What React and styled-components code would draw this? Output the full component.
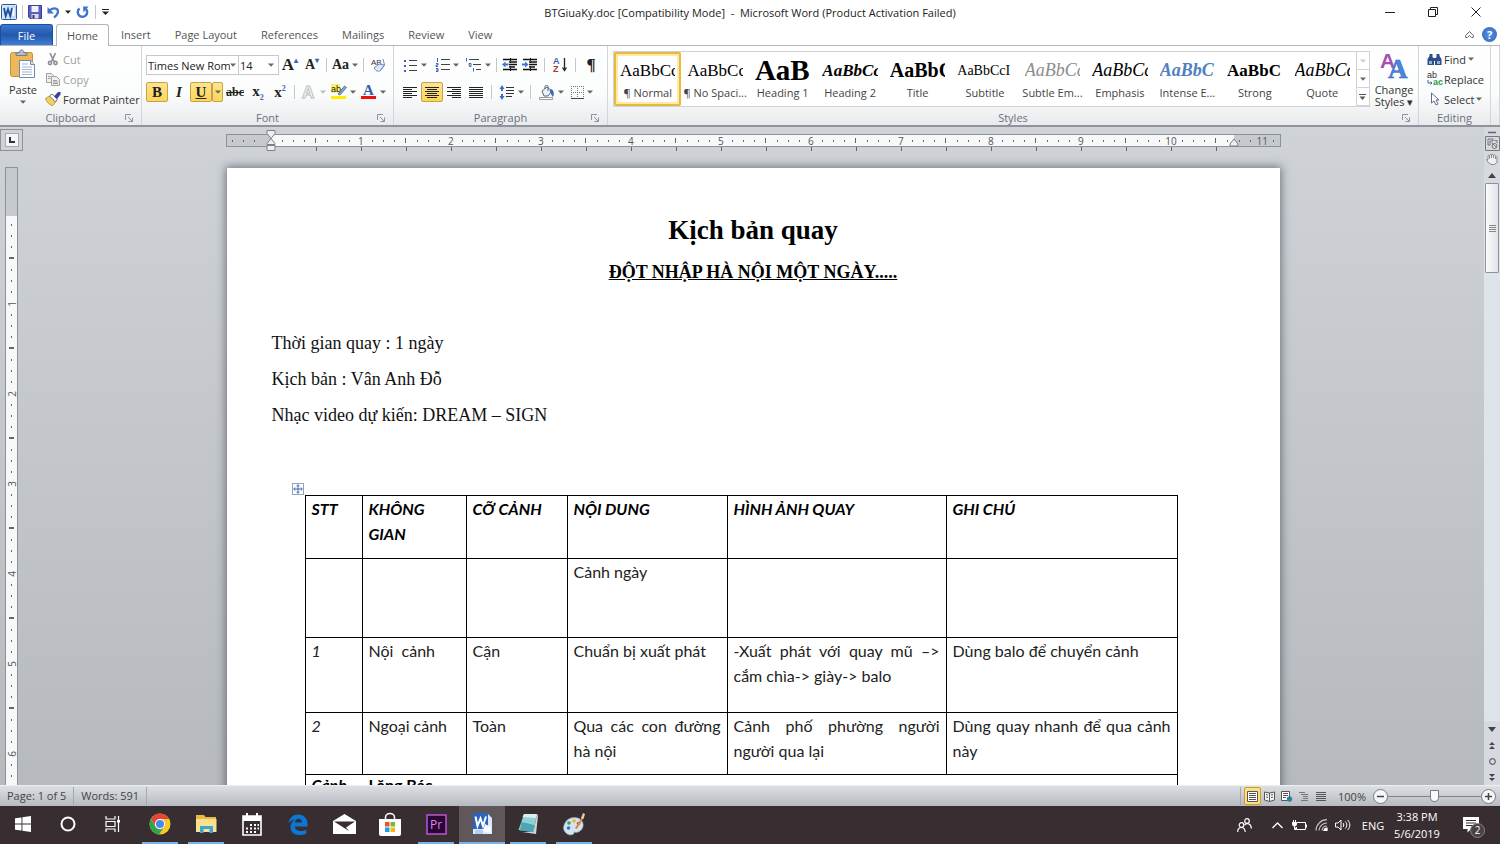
import React from "react";
import styled, { createGlobalStyle, css } from "styled-components";

const ui = `"Open Sans", "Noto Sans", sans-serif`;
const serif = `"Liberation Serif", "Times New Roman", serif`;

const styleList = [
  { name: "¶ Normal", text: "AaBbCc", size: 17, active: true },
  { name: "¶ No Spaci...", text: "AaBbCc", size: 17 },
  { name: "Heading 1", text: "AaB", size: 29, bold: true },
  { name: "Heading 2", text: "AaBbCc", size: 17, bold: true, italic: true },
  { name: "Title", text: "AaBbC", size: 20, bold: true },
  { name: "Subtitle", text: "AaBbCcI", size: 14 },
  { name: "Subtle Em...", text: "AaBbCc", size: 18, italic: true, color: "#8c8c8c" },
  { name: "Emphasis", text: "AaBbCc", size: 18, italic: true },
  { name: "Intense E...", text: "AaBbC", size: 18, bold: true, italic: true, color: "#4f81bd" },
  { name: "Strong", text: "AaBbC", size: 17, bold: true },
  { name: "Quote", text: "AaBbCc", size: 18, italic: true },
];

const tabs = ["Insert", "Page Layout", "References", "Mailings", "Review", "View"];

/* ---------- icons ---------- */

const Arrow = ({ c = "#666" }) => (
  <svg width="6" height="4" viewBox="0 0 6 4" aria-hidden="true">
    <path d="M0 .5h6L3 3.7z" fill={c} />
  </svg>
);

const WordLogo = () => (
  <svg width="16" height="16" viewBox="0 0 16 16">
    <rect x=".5" y=".5" width="15" height="15" rx="1" fill="#d3e6f8" stroke="#2b5797" />
    <path d="M11 3h3v10h-3z" fill="#fff" stroke="#7ea6d8" strokeWidth=".6" />
    <path d="M3 4l1.7 8L7 5.2 9.2 12 11 4" fill="none" stroke="#1e4e9c" strokeWidth="1.8" />
  </svg>
);
const SaveIcon = () => (
  <svg width="14" height="14" viewBox="0 0 14 14">
    <path d="M.5.5h13v13H2l-1.500-1.500z" fill="#5a5fc0" stroke="#3b3f93" />
    <path d="M3.500 1h7v6h-7z" fill="#eef2fb" />
    <path d="M3.500 9h7v4.500h-7z" fill="#d9dcea" />
    <path d="M4.500 10h2v3.500h-2z" fill="#333a6e" />
  </svg>
);
const UndoIcon = () => (
  <svg width="13" height="13" viewBox="0 0 13 13">
    <path d="M2.500 4.500C5 1.500 11 1.500 11 5.500c0 3-2 4.500-4 6" fill="none" stroke="#3f74cc" strokeWidth="2.200" />
    <path d="M.5 1v6.500h6.500z" fill="#3f74cc" />
  </svg>
);
const RedoIcon = () => (
  <svg width="13" height="13" viewBox="0 0 13 13">
    <path d="M3.500 2.500a4.700 4.700 0 1 0 6.500.5" fill="none" stroke="#3f74cc" strokeWidth="2.400" />
    <path d="M7 .5h5.500L7.500 6.500z" fill="#3f74cc" />
  </svg>
);
const PasteIcon = () => (
  <svg width="28" height="30" viewBox="0 0 28 30">
    <rect x="1.500" y="3.500" width="22" height="24" rx="2" fill="#ecb95a" stroke="#c98f35" />
    <path d="M7 6.500V4h3c0-4 5-4 5 0h3v2.500z" fill="#b9bec6" stroke="#777d86" />
    <path d="M10.500 11.500h11l4 4v13h-15z" fill="#fbfdff" stroke="#7089ad" />
    <path d="M21.500 11.500v4h4" fill="#d7e3f3" stroke="#7089ad" />
    <path d="M13 15h6M13 18h10M13 20.500h10M13 23h10M13 25.500h10" stroke="#a4b6cf" />
  </svg>
);
const CutIcon = () => (
  <svg width="12" height="14" viewBox="0 0 12 14" fill="none" stroke="#8e9197">
    <path d="M3 1l4 8.500M8.500 1L4.500 9.500" strokeWidth="1.700" />
    <circle cx="3" cy="11" r="1.600" strokeWidth="1.600" />
    <circle cx="8.500" cy="11" r="1.600" strokeWidth="1.600" />
  </svg>
);
const CopyIcon = () => (
  <svg width="14" height="13" viewBox="0 0 14 13" fill="#eee" stroke="#a0a0a0">
    <path d="M.5 .5h5l2 2v7h-7z" />
    <path d="M5.500 3.500h5l3 3v6h-8z" />
    <path d="M7 7.500h4M7 9h5M7 10.500h5M2 3.500h2.500M2 5.500h2.500" />
  </svg>
);
const PainterIcon = () => (
  <svg width="16" height="14" viewBox="0 0 16 14">
    <path d="M.5 6.500l4-2.500 6.500 5.500-3 4c-3 0-6.500-3-7.500-7z" fill="#f2cf63" stroke="#b98c22" strokeWidth=".8" />
    <path d="M4.500 4l2.500-2 5.500 5-2 3z" fill="#fff" stroke="#555" strokeWidth=".8" />
    <path d="M9 4.500L13 0h2.500v2.500L12 7z" fill="#3d3f96" />
  </svg>
);
const EraseIcon = () => (
  <svg width="16" height="16" viewBox="0 0 16 16">
    <text x="1" y="8" fontSize="8" fontFamily="Liberation Sans" fill="#333">AB</text>
    <path d="M4 11l5-4 5.500 1-4 5.500c-1 1-3 1-4.500 0z" fill="#dfe8f6" stroke="#6f8fc2" />
    <path d="M13 2l1.500 6-4 5.500" fill="none" stroke="#6f8fc2" />
  </svg>
);
const OutlineA = () => (
  <svg width="16" height="16" viewBox="0 0 16 16">
    <text x="1" y="14" fontSize="17" fontWeight="700" fontFamily="Liberation Sans" fill="#fff" stroke="#bdbdbd">A</text>
  </svg>
);
const HighlightIcon = () => (
  <svg width="16" height="16" viewBox="0 0 16 16">
    <rect x="0" y="0" width="9" height="9" fill="#fbf36a" />
    <text x="0" y="8" fontSize="9" fontFamily="Liberation Sans" fill="#222">ab</text>
    <path d="M7 10l6.500-8 2 1.500L9 11z" fill="#8aa2cc" stroke="#40547c" strokeWidth=".7" />
    <rect x="0" y="12" width="15" height="3" fill="#ffee00" />
  </svg>
);
const FontColorIcon = () => (
  <svg width="16" height="16" viewBox="0 0 16 16">
    <text x="2" y="11" fontSize="15" fontWeight="700" fontFamily="Liberation Serif" fill="#3a5fa8">A</text>
    <rect x="0" y="12" width="15" height="3" fill="#f01010" />
  </svg>
);
const LinesIcon = ({ rows }) => (
  <svg width="14" height="13" viewBox="0 0 14 13" stroke="#222" strokeWidth="1">
    {rows.map(([a, b], i) => (
      <path key={i} d={`M${a} ${i * 2 + 1.5}H${b}`} />
    ))}
  </svg>
);
const alignRows = {
  left: [[0, 14], [0, 9], [0, 14], [0, 9], [0, 14], [0, 9]],
  center: [[0, 14], [2, 12], [0, 14], [2, 12], [0, 14], [2, 12]],
  right: [[0, 14], [5, 14], [0, 14], [5, 14], [0, 14], [5, 14]],
  full: [[0, 14], [0, 14], [0, 14], [0, 14], [0, 14], [0, 14]],
};
const BulletsIcon = () => (
  <svg width="14" height="13" viewBox="0 0 14 13">
    <path d="M0 1h2v2H0zM0 6h2v2H0zM0 11h2v2H0z" fill="#3b63b5" />
    <path d="M5 1.500h8M5 6.500h8M5 11.500h8" stroke="#444" />
  </svg>
);
const NumbersIcon = () => (
  <svg width="14" height="14" viewBox="0 0 14 14">
    <path d="M1.500 0v4M0 5.500h2v1.500H0v1.500h2M0 10.500h2v3H0M0 12h2" stroke="#3b63b5" fill="none" />
    <path d="M5 1.500h9M5 6.500h9M5 11.500h9" stroke="#444" />
  </svg>
);
const MultiIcon = () => (
  <svg width="17" height="14" viewBox="0 0 17 14">
    <path d="M1.500 0v3.500M4 5.500h2v3H4.500zM8.500 10v3.500" stroke="#3b63b5" fill="none" />
    <path d="M4 1.500h10M8 6.500h8M11 11.500h5" stroke="#444" />
  </svg>
);
const IndentIcon = ({ flip }) => (
  <svg width="16" height="14" viewBox="0 0 16 14">
    <path d="M1 1.500h14M7 4h8M7 6.500h8M7 9h6M1 11.500h14" stroke="#111" strokeWidth="1.400" />
    <path d="M8.500 0v14" stroke="#111" strokeDasharray="1 1" />
    <path d={flip ? "M6.500 6.500L3 3.500v2H0v2h3v2z" : "M0 6.500l3.500-3v2h3v2h-3v2z"} fill="#3d76d0" />
  </svg>
);
const SortIcon = () => (
  <svg width="15" height="16" viewBox="0 0 15 16">
    <text x="0" y="7" fontSize="9" fontWeight="700" fontFamily="Liberation Sans" fill="#3b63b5">A</text>
    <text x="0" y="15" fontSize="9" fontWeight="700" fontFamily="Liberation Sans" fill="#a33b33">Z</text>
    <path d="M11.500 1v12M9.500 10.500l2 3 2-3" stroke="#222" fill="none" strokeWidth="1.300" />
  </svg>
);
const SpacingIcon = () => (
  <svg width="16" height="15" viewBox="0 0 16 15">
    <path d="M3 0l2.500 4H4v2H2V4H.5zM3 15l2.500-4H4V9H2v2H.5z" fill="#3d6cc0" />
    <path d="M7 2.500h8M7 5.500h8M7 8.500h8M7 11.500h6" stroke="#333" />
  </svg>
);
const ShadeIcon = () => (
  <svg width="16" height="15" viewBox="0 0 16 15">
    <path d="M3 6l5-4 5 4-4 5H5z" fill="#eef2f8" stroke="#55647d" />
    <path d="M6 4V1.500C6 0 9 0 9 1.500V6" fill="none" stroke="#55647d" />
    <path d="M12 4c3 1 3.500 5 2 8-1-1-2.500-4-3.500-6z" fill="#3d6cc0" />
    <path d="M.5 12.500h13v2H.5z" fill="#fff" stroke="#999" />
  </svg>
);
const BordersIcon = () => (
  <svg width="13" height="13" viewBox="0 0 13 13" fill="none" stroke="#777">
    <path d="M0 .5h13M.5 0v12M12.500 0v12M6.500 0v12M0 6.500h13" strokeDasharray="1 1" />
    <path d="M0 12.500h13" stroke="#444" />
  </svg>
);
const ChangeStylesIcon = () => (
  <svg width="30" height="28" viewBox="0 0 30 28">
    <text x="1" y="17" fontSize="21" fontWeight="700" fontFamily="Liberation Sans" fill="#a64fb4">A</text>
    <text x="9" y="27" fontSize="27" fontWeight="700" fontFamily="Liberation Serif" fill="#4b86dc" stroke="#2f62b5" strokeWidth=".5">A</text>
  </svg>
);
const FindIcon = () => (
  <svg width="15" height="13" viewBox="0 0 15 13" fill="#2e4f86">
    <path d="M2.500 1h3v3l1.500 2v6H.5V6l2-3zM9.500 1h3v2l2 3v6H8V6l1.500-2z" />
    <path d="M6 5h3v3H6z" />
    <path d="M2 8h3v3H2zM10 8h3v3h-3z" fill="#8fb0dd" />
  </svg>
);
const ReplaceIcon = () => (
  <svg width="15" height="14" viewBox="0 0 15 14">
    <text x="0" y="6" fontSize="9" fontFamily="Liberation Sans" fill="#333">ab</text>
    <text x="6" y="13" fontSize="9" fontWeight="700" fontFamily="Liberation Sans" fill="#2f9a46">ac</text>
    <path d="M1 8v3h4M3.500 9.500L5 11l-1.500 1.500" fill="none" stroke="#3b63b5" />
  </svg>
);
const SelectIcon = () => (
  <svg width="15" height="14" viewBox="0 0 15 14">
    <path d="M4.500 1v10l2.500-2 2 4 2-1-2-4h3z" fill="#fff" stroke="#5b6c8d" />
  </svg>
);
const Launcher = () => (
  <svg width="8" height="8" viewBox="0 0 8 8" fill="none" stroke="#8b929c">
    <path d="M.5 6V.5H6M3 3l4 4M7.500 3.500v4h-4" />
  </svg>
);

/* ---------- shell ---------- */

const GlobalStyle = createGlobalStyle`
  * { box-sizing: border-box; }
  body { margin: 0; font-family: ${ui}; font-size: 11px; color: #444; }
  button { font: inherit; color: inherit; background: none; border: 0; padding: 0; }
  svg { display: block; flex: none; overflow: visible; }
`;

const Window = styled.div`
  height: 100vh;
  display: flex;
  flex-direction: column;
  overflow: hidden;
  background: #fff;
`;

const TitleBar = styled.header`
  height: 24px;
  display: grid;
  grid-template-columns: 1fr auto 1fr;
  align-items: center;
`;
const QuickAccess = styled.div`
  display: flex;
  align-items: center;
  gap: 5px;
  padding-left: 1px;
  button {
    display: flex;
  }
`;
const Divider = styled.span`
  width: 1px;
  height: 14px;
  margin: 0 ${(p) => p.$m || 0}px;
  background: #c3c6ca;
`;
const WindowTitle = styled.h1`
  margin: 0;
  font-size: 11px;
  font-weight: 400;
  color: #222;
  white-space: pre;
`;
const WindowButtons = styled.div`
  display: flex;
  justify-content: flex-end;
  padding-right: 3px;
  button {
    width: 43px;
    height: 24px;
    display: grid;
    place-items: center;
  }
`;

const TabBar = styled.nav`
  height: 22px;
  display: flex;
  align-items: stretch;
  border-bottom: 1px solid #b3b6bb;
`;
const FileTab = styled.button`
  width: 53px;
  margin-right: 3px;
  color: #fff;
  border: 1px solid #1d4d9e;
  border-bottom: 0;
  border-radius: 3px 3px 0 0;
  background: linear-gradient(#3a78ce, #2458ac 50%, #3d7fd6);
`;
const Tab = styled.button`
  padding: 0 12px;
  color: #555;
  ${(p) =>
    p.$active &&
    css`
      width: 53px;
      padding: 0;
      margin-bottom: -1px;
      border: 1px solid #b3b6bb;
      border-bottom: 0;
      border-radius: 3px 3px 0 0;
      background: #fff;
    `}
`;
const TabTools = styled.div`
  margin-left: auto;
  display: flex;
  align-items: center;
  gap: 8px;
  padding-right: 3px;
`;
const HelpButton = styled.button`
  width: 15px;
  height: 15px;
  border-radius: 50%;
  background: radial-gradient(#5b95e0, #2f62b8);
  color: #fff;
  font-weight: 700;
  line-height: 15px;
`;

/* ---------- ribbon ---------- */

const Ribbon = styled.section`
  height: 81px;
  flex: none;
  display: flex;
  background: linear-gradient(#fff, #fbfcfc 60%, #e8eaed);
  border-bottom: 2px solid #8f949b;
`;
const Group = styled.div`
  display: flex;
  flex-direction: column;
  flex: ${(p) => (p.$w ? `0 0 ${p.$w}px` : "1 1 0")};
  min-width: 0;
  border-right: 1px solid #d3d6da;
`;
const GroupBody = styled.div`
  flex: 1;
  display: flex;
  padding: ${(p) => p.$pad || "0"};
  min-width: 0;
`;
const GroupFoot = styled.div`
  height: 15px;
  display: grid;
  grid-template-columns: 16px 1fr 16px;
  align-items: center;
  text-align: center;
  color: #6b717b;
  line-height: 15px;
`;
const RowStack = styled.div`
  display: flex;
  flex-direction: column;
  gap: 7px;
`;
const ToolRow = styled.div`
  height: 20px;
  display: flex;
  align-items: center;
`;
const Tool = styled.button`
  width: ${(p) => p.$w || 22}px;
  height: 20px;
  flex: none;
  display: flex;
  align-items: center;
  justify-content: center;
  gap: 3px;
  color: #222;
  border-radius: 2px;
  ${(p) =>
    p.$on &&
    css`
      background: linear-gradient(#fce48f, #fcd55b);
      border: 1px solid #c9a149;
    `}
`;
const SerifGlyph = styled.span`
  font-family: ${serif};
  font-size: ${(p) => p.$size || 15}px;
  font-weight: ${(p) => (p.$light ? 400 : 700)};
  font-style: ${(p) => (p.$italic ? "italic" : "normal")};
  text-decoration: ${(p) => p.$deco || "none"};
  line-height: 16px;
  sup,
  sub {
    font-size: 8px;
    line-height: 1;
    color: #3b63b5;
  }
`;
const Combo = styled.label`
  width: ${(p) => p.$w}px;
  height: 20px;
  flex: none;
  display: flex;
  align-items: center;
  border: 1px solid #c5c9ce;
  margin-right: ${(p) => (p.$join ? "-1px" : "0")};
  padding-right: ${(p) => (p.$join ? 2 : 4)}px;
  background: #fff;
  select {
    flex: 1;
    min-width: 0;
    appearance: none;
    border: 0;
    padding: 0 0 0 1px;
    background: none;
    font: inherit;
    color: #222;
  }
`;

const BigButton = styled.button`
  width: ${(p) => p.$w}px;
  display: flex;
  flex-direction: column;
  align-items: center;
  line-height: 12px;
  color: #333;
`;
const BigLabel = styled.span`
  padding: 5px 0 ${(p) => (p.$gap ? 4 : 0)}px;
`;
const SideList = styled.div`
  display: flex;
  flex-direction: column;
`;
const SideButton = styled.button`
  height: 20px;
  display: flex;
  align-items: center;
  gap: 2px;
  white-space: nowrap;
  color: ${(p) => (p.disabled ? "#a0a0a0" : "#333")};
`;
const IconSlot = styled.span`
  width: 16px;
  margin-left: 3px;
  display: flex;
  justify-content: center;
`;

const Gallery = styled.div`
  flex: 1;
  min-width: 0;
  height: 56px;
  display: flex;
  border: 1px solid #cfd2d6;
  background: #fff;
`;
const StyleCard = styled.button`
  flex: 1 1 0;
  min-width: 0;
  padding: 0 6px;
  display: flex;
  flex-direction: column;
  align-items: center;
  color: #444;
  ${(p) =>
    p.$active &&
    css`
      border-radius: 2px;
      box-shadow: inset 0 0 0 2px #e9b83f, inset 0 0 0 4px #fdeaa5;
    `}
`;
const Preview = styled.span`
  width: 100%;
  height: 32px;
  line-height: 37px;
  overflow: hidden;
  white-space: nowrap;
  text-align: left;
  font-family: ${serif};
  font-size: ${(p) => p.$size}px;
  font-weight: ${(p) => (p.$bold ? 700 : 400)};
  font-style: ${(p) => (p.$italic ? "italic" : "normal")};
  color: ${(p) => p.$color || "#000"};
`;
const StyleName = styled.span`
  height: 18px;
  line-height: 18px;
  white-space: nowrap;
`;
const GalleryNav = styled.div`
  width: 13px;
  display: flex;
  flex-direction: column;
  border-left: 1px solid #cfd2d6;
  button {
    flex: 1;
    display: grid;
    place-items: center;
    border-bottom: 1px solid #cfd2d6;
  }
`;

/* ---------- work area ---------- */

const Workspace = styled.main`
  flex: 1;
  min-height: 0;
  display: grid;
  grid-template-columns: 24px 1fr 16px;
  background: linear-gradient(#cfd3d8, #b6babf);
`;
const LeftRail = styled.div`
  display: flex;
  flex-direction: column;
  padding-top: 2px;
  min-height: 0;
  overflow: hidden;
`;
const TabSelector = styled.button`
  width: 23px;
  height: 22px;
  flex: none;
  display: grid;
  place-items: center;
  border: 1px solid #8d9299;
  margin-bottom: 16px;
  span {
    width: 14px;
    height: 14px;
    display: grid;
    place-items: center;
    border: 1px solid #a7abb1;
    background: #f4f5f6;
  }
`;
const Ruler = styled.div`
  display: flex;
  flex-direction: ${(p) => (p.$v ? "column" : "row")};
  overflow: hidden;
  border: 1px solid #8d9299;
  font-size: 10px;
  color: #555;
  ${(p) =>
    p.$v
      ? css`
          flex: 1;
          width: 13px;
          margin-left: 5px;
          border-bottom: 0;
        `
      : css`
          height: 13px;
        `}
`;
const RulerMargin = styled.div`
  flex: 0 0 ${(p) => p.$size}px;
  display: grid;
  grid-template-columns: repeat(4, minmax(0, 1fr));
  background: #c6cace;
`;
const RulerBody = styled.div`
  flex: 1;
  min-width: 0;
  display: flex;
  flex-direction: ${(p) => (p.$v ? "column" : "row")};
  padding: ${(p) => (p.$v ? "3px 0 0" : "0 0 0 6px")};
  overflow: hidden;
  background: #f7f8f9;
`;
const Inch = styled.div`
  flex: 0 0 90px;
  display: grid;
  ${(p) => (p.$v ? "grid-template-rows" : "grid-template-columns")}: repeat(8, minmax(0, 1fr));
`;
const Mark = styled.span`
  display: grid;
  place-items: center;
  line-height: 10px;
  white-space: nowrap;
  min-height: 0;
  writing-mode: ${(p) => (p.$v ? "sideways-lr" : "horizontal-tb")};
  &::before {
    content: ${(p) => (p.$num ? "none" : '""')};
    width: ${(p) => (p.$v && p.$half ? 5 : 1)}px;
    height: ${(p) => (!p.$v && p.$half ? 5 : 2)}px;
    background: #666;
  }
`;
const TabStops = styled.div`
  height: 4px;
  margin: 0 46px 0 90px;
  background: repeating-linear-gradient(90deg, #666 0 1px, transparent 1px 45px);
`;
const DocArea = styled.div`
  min-width: 0;
  min-height: 0;
  overflow: hidden;
  display: flex;
  flex-direction: column;
  align-items: center;
  padding: 7px 2px 0 0;
`;
const RulerWrap = styled.div`
  position: relative;
  width: 1055px;
  height: 34px;
  flex: none;
`;
const IndentMark = styled.svg`
  position: absolute;
  top: -4px;
  ${(p) => p.$side}: ${(p) => p.$at}px;
`;
const Paper = styled.article`
  width: 1053px;
  flex: 1 0 auto;
  padding: 40px 45px 0;
  background: #fff;
  box-shadow: 0 0 9px 1px rgba(40, 46, 56, 0.6);
  font-family: ${serif};
  font-size: 18px;
  color: #111;
`;
const DocTitle = styled.h2`
  margin: 0 0 2px;
  text-align: center;
  font-size: 27px;
  line-height: 44px;
  color: #000;
`;
const DocSubtitle = styled.h3`
  margin: 0 0 35px;
  text-align: center;
  font-size: 18px;
  line-height: 36px;
  text-decoration: underline;
  color: #000;
`;
const Para = styled.p`
  margin: 0;
  line-height: 36px;
`;
const TableWrap = styled.div`
  position: relative;
  margin: 62px 0 0 33px;
`;
const MoveHandle = styled.button`
  position: absolute;
  left: -13px;
  top: -12px;
  width: 12px;
  height: 12px;
  display: grid;
  place-items: center;
  border: 1px solid #9aa3b5;
  background: #fff;
`;
const Sheet = styled.table`
  width: 873px;
  table-layout: fixed;
  border-collapse: collapse;
  font-family: Lato, "Open Sans", sans-serif;
  font-size: 16px;
  line-height: 25px;
  color: #222;
`;
const Row = styled.tr`
  height: ${(p) => p.$h}px;
`;
const cell = css`
  border: 1px solid #000;
  padding: 0 6px;
  vertical-align: top;
  text-align: left;
`;
const Head = styled.th`
  ${cell}
  font-style: italic;
  color: #000;
`;
const Cell = styled.td`
  ${cell}
  white-space: pre;
  font-style: ${(p) => (p.$italic ? "italic" : "normal")};
`;
const Line = styled.span`
  display: block;
  white-space: normal;
  text-align-last: ${(p) => (p.$full ? "justify" : "left")};
`;
const SceneCell = styled.td`
  ${cell}
  font-weight: 700;
  color: #000;
  line-height: 20px;
  em {
    display: inline-block;
    width: 57px;
  }
`;

const ScrollRail = styled.div`
  display: flex;
  flex-direction: column;
  align-items: center;
  background: #d5d9e0;
  min-height: 0;
  button {
    width: 16px;
    height: 16px;
    flex: none;
    display: grid;
    place-items: center;
  }
`;
const ScrollTrack = styled.div`
  flex: 1;
  align-self: stretch;
  padding: 0 1px;
  background: #dfe3ea;
`;
const ScrollThumb = styled.div`
  height: 90px;
  display: grid;
  place-items: center;
  border: 1px solid #8d9299;
  border-radius: 1px;
  background: linear-gradient(90deg, #fafbfc, #dfe3e8);
`;

/* ---------- bottom bars ---------- */

const StatusBar = styled.footer`
  height: 21px;
  flex: none;
  display: flex;
  align-items: center;
  padding-right: 4px;
  border-top: 1px solid #eceef0;
  background: linear-gradient(#dcdfe3, #b7bbc1);
`;
const StatusItem = styled.span`
  padding: 0 7px;
  line-height: 18px;
  border-right: 1px solid #a3a8af;
`;
const Views = styled.div`
  margin-left: auto;
  display: flex;
  align-items: center;
  border-left: 1px solid #a3a8af;
  padding: 0 9px 0 3px;
`;
const ViewButton = styled.button`
  width: 17px;
  height: 18px;
  display: grid;
  place-items: center;
  border-radius: 2px;
  ${(p) =>
    p.$on &&
    css`
      border: 1px solid #d09a2c;
      background: #fce082;
    `}
`;
const ZoomLabel = styled.span`
  margin-right: 7px;
`;
const ZoomButton = styled.button`
  width: 15px;
  height: 15px;
  display: grid;
  place-items: center;
  border: 1px solid #777c84;
  border-radius: 50%;
  background: #f5f6f7;
`;
const ZoomRange = styled.input`
  appearance: none;
  width: 93px;
  height: 16px;
  margin: 0;
  background: linear-gradient(#7f848b, #7f848b) center / 100% 1px no-repeat;
  &::-webkit-slider-thumb {
    appearance: none;
    width: 9px;
    height: 12px;
    border: 1px solid #777c84;
    border-radius: 1px 1px 5px 5px;
    background: #fafafa;
  }
`;

const TaskBar = styled.nav`
  height: 38px;
  flex: none;
  display: flex;
  align-items: stretch;
  background: #382e32;
  color: #fff;
`;
const TaskSet = styled.div`
  display: flex;
  padding-right: 2px;
`;
const TaskButton = styled.button`
  width: ${(p) => p.$w || 46}px;
  padding: 0 5px;
  display: flex;
  flex-direction: column;
  align-items: center;
  background: ${(p) => (p.$active ? "#5f575a" : "none")};
  &::after {
    content: "";
    width: 100%;
    height: 2px;
    background: ${(p) => (p.$open ? "#78b4e8" : "transparent")};
    box-shadow: ${(p) => (p.$active ? "-5px 0 #78b4e8, 5px 0 #78b4e8" : "none")};
  }
  svg {
    margin: auto;
  }
`;
const Tray = styled.div`
  margin-left: auto;
  display: flex;
  align-items: center;
`;
const TrayButton = styled.button`
  width: ${(p) => p.$w || 22}px;
  display: grid;
  place-items: center;
`;
const Clock = styled.time`
  width: 50px;
  text-align: center;
  line-height: 17px;
  white-space: nowrap;
`;
const Notice = styled.span`
  position: relative;
`;
const Badge = styled.span`
  position: absolute;
  left: 7px;
  top: 6px;
  width: 15px;
  height: 15px;
  border: 1px solid #8a8386;
  border-radius: 50%;
  background: #4a4145;
  font-size: 10px;
  line-height: 13px;
  text-align: center;
`;

/* ---------- taskbar drawings ---------- */

const taskIcons = {
  start: (
    <svg width="16" height="16" viewBox="0 0 16 16" fill="#fff">
      <path d="M0 2.300L6.500 1.400v6.100H0zM7.400 1.300L16 0v7.500H7.400zM0 8.400h6.500v6.200L0 13.700zM7.400 8.400H16V16l-8.600-1.200z" />
    </svg>
  ),
  cortana: (
    <svg width="16" height="16" viewBox="0 0 16 16">
      <circle cx="8" cy="8" r="6.500" fill="none" stroke="#fff" strokeWidth="2" />
    </svg>
  ),
  tasks: (
    <svg width="16" height="16" viewBox="0 0 16 16" fill="none" stroke="#fff" strokeWidth="1.200">
      <path d="M1 0v3h9V0M1 16v-3h9v3M1 5.500h9v5H1zM13.500 0v16" />
      <path d="M12 4h3v2.500h-3z" fill="#fff" stroke="none" />
    </svg>
  ),
  chrome: (
    <svg width="22" height="22" viewBox="0 0 22 22">
      <circle cx="11" cy="11" r="10.500" fill="#f6c92b" />
      <path d="M2 5.700A10.500 10.500 0 0 1 20.200 6H11a5 5 0 0 0-4.600 7z" fill="#e0473a" />
      <path d="M2 5.700A10.500 10.500 0 0 0 10 21.500l5-7.500a5 5 0 0 1-8.600-.5z" fill="#32a350" />
      <circle cx="11" cy="11" r="5" fill="#fff" />
      <circle cx="11" cy="11" r="4" fill="#4a86ef" />
    </svg>
  ),
  folder: (
    <svg width="21" height="20" viewBox="0 0 21 20">
      <path d="M0 1h8l1.500 2H20v15H0z" fill="#e9b94a" />
      <path d="M0 5h20.500v13H0z" fill="#fbe08d" />
      <path d="M4 19v-7h13v7h-3.500v-4h-6v4z" fill="#3aa6d9" />
    </svg>
  ),
  calendar: (
    <svg width="20" height="23" viewBox="0 0 20 23">
      <path d="M1 3h18v19H1z" fill="none" stroke="#fff" strokeWidth="1.600" />
      <path d="M1 3h18v5H1zM4 0h2v4H4zM14 0h2v4h-2z" fill="#fff" />
      <path d="M8 11h2v2H8zM12 11h2v2h-2zM15.500 11h1.500v2h-1.500zM4 14.500h2v2H4zM8 14.500h2v2H8zM12 14.500h2v2h-2zM15.500 14.500h1.500v2h-1.500zM4 18h2v2H4zM8 18h2v2H8zM12 18h2v2h-2z" fill="#fff" />
    </svg>
  ),
  edge: (
    <svg width="20" height="21" viewBox="0 0 20 21">
      <path d="M.5 9.500C1.500 3.500 5.500.5 10 .5c6 0 9.500 4.200 9.500 9.500v2.500H6.800c.3 3 2.800 4.500 5.700 4.500 2.200 0 4.200-.6 5.800-1.600v4C16.500 20.400 14 21 11.500 21 6 21 2.500 17.500 2.500 13c0-3.300 1.800-6 5-7.500C4.500 5.700 2.300 7 .5 9.500zM7 8.500h7c0-2.300-1.300-3.800-3.400-3.800C8.600 4.700 7.300 6.300 7 8.500z" fill="#0b78d7" />
    </svg>
  ),
  mail: (
    <svg width="23" height="20" viewBox="0 0 23 20">
      <path d="M0 7L11.500 0 23 7v13H0z" fill="#fff" />
      <path d="M1 7.500h21L13 13.500l3 3.500z" fill="#382e32" />
    </svg>
  ),
  store: (
    <svg width="22" height="23" viewBox="0 0 22 23">
      <path d="M6.500 6V4.500a4.500 4 0 0 1 9 0V6" fill="none" stroke="#fff" strokeWidth="1.500" />
      <path d="M0 6h22v15a2 2 0 0 1-2 2H2a2 2 0 0 1-2-2z" fill="#fff" />
      <path d="M6 9h4.500v4.500H6z" fill="#e8532a" />
      <path d="M11.500 9H16v4.500h-4.500z" fill="#7cb82f" />
      <path d="M6 14.500h4.500V19H6z" fill="#1ba0e2" />
      <path d="M11.500 14.500H16V19h-4.500z" fill="#fbb813" />
    </svg>
  ),
  premiere: (
    <svg width="21" height="21" viewBox="0 0 21 21">
      <rect x="1" y="1" width="19" height="19" fill="#2a0634" stroke="#b957d3" strokeWidth="1.500" />
      <text x="4" y="15" fontSize="12" fontFamily="Open Sans" fill="#dc86f2">Pr</text>
    </svg>
  ),
  word: (
    <svg width="21" height="22" viewBox="0 0 21 22">
      <path d="M1 0h14l5 5v16H1z" fill="#dbe9f9" />
      <path d="M1 0h15v16H1z" fill="#2a64bd" />
      <path d="M3.500 3.500L5.500 13 8.500 5.500l2.500 7.500 3-9.500" fill="none" stroke="#fff" strokeWidth="2" />
      <path d="M13 11l6 3v6l-8-2z" fill="#f7fbff" />
      <path d="M3 18h8M3 20h8" stroke="#8eb3e3" />
    </svg>
  ),
  notepad: (
    <svg width="21" height="22" viewBox="0 0 21 22">
      <path d="M6 1h13l-3.500 18-15-2z" fill="#8fd0d8" />
      <path d="M6 1h13l-1 4-13.500-1z" fill="#d8eef0" />
      <path d="M19 1l1 2-2 18-14-2 11.500 0z" fill="#cfd5d6" />
      <path d="M3.500 9l13 3-1.500 7-13-1.500z" fill="#4fa5b2" />
    </svg>
  ),
  paint: (
    <svg width="23" height="23" viewBox="0 0 23 23">
      <path d="M2 10c3-6 12-7 16-3 3 3 3 8-1 11s-6 0-6 2-5 3-8 0-3-6-1-10z" fill="#d5e3ee" stroke="#8fa9bd" strokeWidth=".7" />
      <circle cx="6" cy="10" r="1.800" fill="#38a34c" />
      <circle cx="11" cy="8" r="1.800" fill="#e8b624" />
      <circle cx="15.500" cy="10.500" r="1.800" fill="#d9472b" />
      <circle cx="5.500" cy="15" r="1.800" fill="#2f6fc4" />
      <path d="M12 15l7-11 1.500 1L14 16z" fill="#c98f4a" />
      <path d="M18 5l2-5 2 1-1.500 5z" fill="#e9cfa0" />
    </svg>
  ),
};

const pinned = [
  { id: "chrome", label: "Chrome", open: true },
  { id: "folder", label: "File Explorer", open: true },
  { id: "calendar", label: "Calendar" },
  { id: "edge", label: "Edge" },
  { id: "mail", label: "Mail" },
  { id: "store", label: "Store" },
  { id: "premiere", label: "Premiere", open: true },
  { id: "word", label: "Word", open: true, active: true },
  { id: "notepad", label: "Notepad", open: true },
  { id: "paint", label: "Paint", open: true },
];

/* ---------- parts ---------- */

function InchMarks({ n, v }) {
  return (
    <Inch $v={v}>
      {[1, 2, 3, 4, 5, 6, 7].map((k) => (
        <Mark key={k} $v={v} $half={k === 4} />
      ))}
      <Mark $v={v} $num>
        {n}
      </Mark>
    </Inch>
  );
}

function Foot({ children, launcher = true }) {
  return (
    <GroupFoot>
      <span />
      <span>{children}</span>
      {launcher && <Launcher />}
    </GroupFoot>
  );
}

function RibbonBar() {
  return (
    <Ribbon>
      <Group $w={142}>
        <GroupBody $pad="3px 0 0 4px">
          <BigButton $w={38}>
            <PasteIcon />
            <BigLabel $gap>Paste</BigLabel>
            <Arrow />
          </BigButton>
          <SideList>
            <SideButton disabled>
              <IconSlot><CutIcon /></IconSlot>Cut
            </SideButton>
            <SideButton disabled>
              <IconSlot><CopyIcon /></IconSlot>Copy
            </SideButton>
            <SideButton>
              <IconSlot><PainterIcon /></IconSlot>Format Painter
            </SideButton>
          </SideList>
        </GroupBody>
        <Foot>Clipboard</Foot>
      </Group>

      <Group $w={252}>
        <GroupBody $pad="9px 0 0 4px">
          <RowStack>
            <ToolRow>
              <Combo $w={93} $join>
                <select aria-label="Font"><option>Times New Rom</option></select>
                <Arrow />
              </Combo>
              <Combo $w={41}>
                <select aria-label="Font size"><option>14</option></select>
                <Arrow />
              </Combo>
              <Tool aria-label="Grow font"><SerifGlyph $size={17}>A<sup>▴</sup></SerifGlyph></Tool>
              <Tool aria-label="Shrink font"><SerifGlyph $size={14}>A<sup>▾</sup></SerifGlyph></Tool>
              <Divider $m={3} />
              <Tool $w={30}><SerifGlyph $size={14}>Aa</SerifGlyph><Arrow /></Tool>
              <Divider $m={3} />
              <Tool aria-label="Clear formatting"><EraseIcon /></Tool>
            </ToolRow>
            <ToolRow>
              <Tool $on><SerifGlyph>B</SerifGlyph></Tool>
              <Tool><SerifGlyph $italic>I</SerifGlyph></Tool>
              <Tool $on><SerifGlyph $deco="underline">U</SerifGlyph></Tool>
              <Tool $on $w={11} aria-label="Underline styles"><Arrow /></Tool>
              <Tool $w={24}><SerifGlyph $size={12} $deco="line-through">abc</SerifGlyph></Tool>
              <Tool><SerifGlyph>x<sub>2</sub></SerifGlyph></Tool>
              <Tool><SerifGlyph>x<sup>2</sup></SerifGlyph></Tool>
              <Divider $m={3} />
              <Tool $w={30} aria-label="Text effects"><OutlineA /><Arrow c="#bbb" /></Tool>
              <Tool $w={30} aria-label="Highlight"><HighlightIcon /><Arrow /></Tool>
              <Tool $w={30} aria-label="Font color"><FontColorIcon /><Arrow /></Tool>
            </ToolRow>
          </RowStack>
        </GroupBody>
        <Foot>Font</Foot>
      </Group>

      <Group $w={214}>
        <GroupBody $pad="9px 0 0 5px">
          <RowStack>
            <ToolRow>
              <Tool $w={32} aria-label="Bullets"><BulletsIcon /><Arrow /></Tool>
              <Tool $w={32} aria-label="Numbering"><NumbersIcon /><Arrow /></Tool>
              <Tool $w={30} aria-label="Multilevel list"><MultiIcon /><Arrow /></Tool>
              <Divider $m={3} />
              <Tool $w={20} aria-label="Decrease indent"><IndentIcon /></Tool>
              <Tool $w={20} aria-label="Increase indent"><IndentIcon flip /></Tool>
              <Divider $m={4} />
              <Tool aria-label="Sort"><SortIcon /></Tool>
              <Divider $m={4} />
              <Tool><SerifGlyph $size={17}>¶</SerifGlyph></Tool>
            </ToolRow>
            <ToolRow>
              <Tool aria-label="Align left"><LinesIcon rows={alignRows.left} /></Tool>
              <Tool $on aria-label="Center"><LinesIcon rows={alignRows.center} /></Tool>
              <Tool aria-label="Align right"><LinesIcon rows={alignRows.right} /></Tool>
              <Tool aria-label="Justify"><LinesIcon rows={alignRows.full} /></Tool>
              <Divider $m={4} />
              <Tool $w={30} aria-label="Line spacing"><SpacingIcon /><Arrow /></Tool>
              <Divider $m={4} />
              <Tool $w={32} aria-label="Shading"><ShadeIcon /><Arrow /></Tool>
              <Tool $w={30} aria-label="Borders"><BordersIcon /><Arrow /></Tool>
            </ToolRow>
          </RowStack>
        </GroupBody>
        <Foot>Paragraph</Foot>
      </Group>

      <Group>
        <GroupBody $pad="5px 0 0 5px">
          <Gallery>
            {styleList.map((s) => (
              <StyleCard key={s.name} $active={s.active}>
                <Preview $size={s.size} $bold={s.bold} $italic={s.italic} $color={s.color}>
                  {s.text}
                </Preview>
                <StyleName>{s.name}</StyleName>
              </StyleCard>
            ))}
            <GalleryNav>
              <button aria-label="Previous styles"><Arrow c="#ccc" /></button>
              <button aria-label="Next styles"><Arrow /></button>
              <button aria-label="More styles">
                <svg width="7" height="6" viewBox="0 0 7 6"><path d="M0 .5h7" stroke="#555" /><path d="M.5 2.500h6L3.500 6z" fill="#555" /></svg>
              </button>
            </GalleryNav>
          </Gallery>
          <BigButton $w={48}>
            <ChangeStylesIcon />
            <BigLabel>Change</BigLabel>
            <span>Styles ▾</span>
          </BigButton>
        </GroupBody>
        <Foot>Styles</Foot>
      </Group>

      <Group $w={72}>
        <GroupBody $pad="3px 0 0 8px">
          <SideList>
            <SideButton><FindIcon />Find <Arrow /></SideButton>
            <SideButton><ReplaceIcon />Replace</SideButton>
            <SideButton><SelectIcon />Select <Arrow /></SideButton>
          </SideList>
        </GroupBody>
        <Foot launcher={false}>Editing</Foot>
      </Group>
      <Group $w={9} />
    </Ribbon>
  );
}

function Document() {
  return (
    <DocArea>
      <RulerWrap>
        <Ruler>
          <RulerMargin $size={44}>
            <Mark /><Mark /><Mark />
          </RulerMargin>
          <RulerBody>
            {[1, 2, 3, 4, 5, 6, 7, 8, 9, 10, 11].map((n) => (
              <InchMarks key={n} n={n} />
            ))}
          </RulerBody>
          <RulerMargin $size={46}>
            <Mark /><Mark /><Mark $num>11</Mark><Mark />
          </RulerMargin>
        </Ruler>
        <TabStops />
        <IndentMark $side="left" $at={40} width="10" height="22" viewBox="0 0 10 22" fill="#eee" stroke="#7c8187">
          <path d="M1 .5h8v3l-4 5-4-5zM5 8.500l4 5v1H1v-1zM1 15.500h8v5H1z" />
        </IndentMark>
        <IndentMark $side="right" $at={42} width="10" height="22" viewBox="0 0 10 22" fill="#eee" stroke="#7c8187">
          <path d="M5 9l4 5v2H1v-2z" />
        </IndentMark>
      </RulerWrap>
      <Paper>
        <DocTitle>Kịch bản quay</DocTitle>
        <DocSubtitle>ĐỘT NHẬP HÀ NỘI MỘT NGÀY.....</DocSubtitle>
        <Para>Thời gian quay : 1 ngày</Para>
        <Para>Kịch bản : Vân Anh Đỗ</Para>
        <Para>Nhạc video dự kiến: DREAM – SIGN</Para>
        <TableWrap>
          <MoveHandle aria-label="Move table">
            <svg width="10" height="10" viewBox="0 0 10 10" fill="none" stroke="#3b63b5">
              <path d="M5 1v8M1 5h8M3.500 2L5 .7 6.500 2M3.500 8L5 9.300 6.500 8M2 3.500L.7 5 2 6.500M8 3.500L9.300 5 8 6.500" />
            </svg>
          </MoveHandle>
          <Sheet>
            <colgroup>
              <col width="57" />
              <col width="104" />
              <col width="101" />
              <col width="160" />
              <col width="219" />
              <col />
            </colgroup>
            <thead>
              <Row $h={63}>
                <Head>STT</Head>
                <Head>KHÔNG GIAN</Head>
                <Head>CỠ CẢNH</Head>
                <Head>NỘI DUNG</Head>
                <Head>HÌNH ẢNH QUAY</Head>
                <Head>GHI CHÚ</Head>
              </Row>
            </thead>
            <tbody>
              <Row $h={79}>
                <Cell /><Cell /><Cell />
                <Cell>Cảnh ngày</Cell>
                <Cell /><Cell />
              </Row>
              <Row $h={75}>
                <Cell $italic>1</Cell>
                <Cell>Nội  cảnh</Cell>
                <Cell>Cận</Cell>
                <Cell>Chuẩn bị xuất phát</Cell>
                <Cell>
                  <Line $full>-Xuất phát với quay mũ –&gt;</Line>
                  <Line>cắm chìa-&gt; giày-&gt; balo</Line>
                </Cell>
                <Cell>Dùng balo để chuyển cảnh</Cell>
              </Row>
              <Row $h={62}>
                <Cell $italic>2</Cell>
                <Cell>Ngoại cảnh</Cell>
                <Cell>Toàn</Cell>
                <Cell>
                  <Line $full>Qua các con đường</Line>
                  <Line>hà nội</Line>
                </Cell>
                <Cell>
                  <Line $full>Cảnh phố phường người</Line>
                  <Line>người qua lại</Line>
                </Cell>
                <Cell>
                  <Line $full>Dùng quay nhanh để qua cảnh</Line>
                  <Line>này</Line>
                </Cell>
              </Row>
              <Row $h={62}>
                <SceneCell colSpan={6}><em>Cảnh</em>Lăng Bác</SceneCell>
              </Row>
            </tbody>
          </Sheet>
        </TableWrap>
      </Paper>
    </DocArea>
  );
}

function Scrollbar() {
  return (
    <ScrollRail>
      <svg width="16" height="8" viewBox="0 0 16 8"><path d="M4 5.500h8" stroke="#666" strokeWidth="1.500" /></svg>
      <button aria-label="Ruler">
        <svg width="15" height="15" viewBox="0 0 15 15" fill="none" stroke="#777">
          <path d="M.5.500h14v14H.5z" />
          <path d="M3 3h5v2H5v4H3zM6.500 6.500L12 12M9.500 4.500H12V7" />
          <circle cx="9.500" cy="10" r="2.500" />
        </svg>
      </button>
      <button aria-label="Pan">
        <svg width="12" height="12" viewBox="0 0 12 12" fill="#eee" stroke="#888">
          <path d="M2 6.500V3.500C2 2 3.500 2 3.500 3.500 3.500 1 5.500 1 5.500 2c.5-1.500 2-1 2 .5C8.500 1.500 9.500 2 9.500 3.500c1-.5 1.500 0 1.500 1V8c0 2-1.500 3.500-3.500 3.500H6C4 11.500 1 9 .8 6.500zM3.500 3.500v2M5.500 2v3M7.500 2.500V5M9.500 3.500V6" />
        </svg>
      </button>
      <button aria-label="Scroll up">
        <svg width="8" height="5" viewBox="0 0 8 5"><path d="M0 5h8L4 0z" fill="#444" /></svg>
      </button>
      <ScrollTrack>
        <ScrollThumb>
          <svg width="7" height="7" viewBox="0 0 7 7" stroke="#888"><path d="M0 .5h7M0 2.500h7M0 4.500h7M0 6.500h7" /></svg>
        </ScrollThumb>
      </ScrollTrack>
      <button aria-label="Scroll down">
        <svg width="8" height="5" viewBox="0 0 8 5"><path d="M0 0h8L4 5z" fill="#444" /></svg>
      </button>
      <button aria-label="Previous page">
        <svg width="6" height="7" viewBox="0 0 6 7"><path d="M0 3h6L3 0zM0 7h6L3 4z" fill="#444" /></svg>
      </button>
      <button aria-label="Browse object">
        <svg width="7" height="7" viewBox="0 0 7 7"><circle cx="3.500" cy="3.500" r="2.800" fill="none" stroke="#666" strokeWidth="1.200" /></svg>
      </button>
      <button aria-label="Next page">
        <svg width="6" height="7" viewBox="0 0 6 7"><path d="M0 0h6L3 3zM0 4h6L3 7z" fill="#444" /></svg>
      </button>
    </ScrollRail>
  );
}

function Status() {
  return (
    <StatusBar>
      <StatusItem>Page: 1 of 5</StatusItem>
      <StatusItem>Words: 591</StatusItem>
      <Views>
        <ViewButton $on aria-label="Print layout">
          <svg width="11" height="11" viewBox="0 0 11 11" stroke="#555"><path d="M.5.5h10v10H.5z" fill="#fff" /><path d="M2 2.500h7M2 4.500h7M2 6.500h7M2 8.500h7" /></svg>
        </ViewButton>
        <ViewButton aria-label="Full screen reading">
          <svg width="11" height="11" viewBox="0 0 11 11" fill="#f5f5f5" stroke="#555"><path d="M5.500 2L.5 1v8l5 1.500 5-1.500V1zM5.500 2v8M2 3.500l2 .5M2 6l2 .5M7 4l2-.5M7 6.500L9 6" /></svg>
        </ViewButton>
        <ViewButton aria-label="Web layout">
          <svg width="12" height="11" viewBox="0 0 12 11"><path d="M.5.5h8v9h-8z" fill="#fff" stroke="#555" /><path d="M2 2.500h5M2 4.500h5M2 6.500h3" stroke="#555" /><circle cx="8.500" cy="8" r="2.700" fill="#2d7f9b" /></svg>
        </ViewButton>
        <ViewButton aria-label="Outline">
          <svg width="10" height="9" viewBox="0 0 10 9" stroke="#777"><path d="M0 .5h6M2 2.500h7M4 4.500h5M4 6.500h5M2 8.500h7" /></svg>
        </ViewButton>
        <ViewButton aria-label="Draft">
          <svg width="10" height="9" viewBox="0 0 10 9" stroke="#555"><path d="M0 .5h10M0 2.500h10M0 4.500h10M0 6.500h10M0 8.500h10" /></svg>
        </ViewButton>
      </Views>
      <ZoomLabel>100%</ZoomLabel>
      <ZoomButton aria-label="Zoom out">
        <svg width="7" height="7" viewBox="0 0 7 7"><path d="M0 3.500h7" stroke="#444" strokeWidth="1.500" /></svg>
      </ZoomButton>
      <ZoomRange type="range" aria-label="Zoom" defaultValue="50" />
      <ZoomButton aria-label="Zoom in">
        <svg width="7" height="7" viewBox="0 0 7 7"><path d="M0 3.500h7M3.500 0v7" stroke="#444" strokeWidth="1.500" /></svg>
      </ZoomButton>
    </StatusBar>
  );
}

function Tasks() {
  return (
    <TaskBar>
      <TaskSet>
        <TaskButton $w={45} aria-label="Start">{taskIcons.start}</TaskButton>
        <TaskButton $w={45} aria-label="Cortana">{taskIcons.cortana}</TaskButton>
        <TaskButton $w={45} aria-label="Task view">{taskIcons.tasks}</TaskButton>
      </TaskSet>
      {pinned.map((t) => (
        <TaskButton key={t.id} aria-label={t.label} $open={t.open} $active={t.active}>
          {taskIcons[t.id]}
        </TaskButton>
      ))}
      <Tray>
        <TrayButton $w={44} aria-label="People">
          <svg width="15" height="15" viewBox="0 0 15 15" fill="none" stroke="#fff" strokeWidth="1.200">
            <circle cx="4.500" cy="7" r="2.300" /><path d="M.7 14c0-6 7.500-6 7.500 0" />
            <circle cx="10" cy="3" r="2.300" /><path d="M7.500 7c2.500-3 7-1 6.800 3.500" />
          </svg>
        </TrayButton>
        <TrayButton aria-label="Hidden icons">
          <svg width="11" height="7" viewBox="0 0 11 7" fill="none" stroke="#fff" strokeWidth="1.300"><path d="M.5 6l5-5 5 5" /></svg>
        </TrayButton>
        <TrayButton aria-label="Battery">
          <svg width="15" height="11" viewBox="0 0 15 11" fill="none" stroke="#fff"><path d="M5 2.500h8.500v7H4.500V7M14.500 4.500v3" /><path d="M.5 2.500v2c0 2 4 2 4 0v-2zM1.500 0v2M3.500 0v2M2.500 6v3.500h2" fill="#fff" /></svg>
        </TrayButton>
        <TrayButton aria-label="Network">
          <svg width="13" height="12" viewBox="0 0 13 12" fill="none" stroke="#c9c5c7" strokeWidth="1.200"><path d="M1 11.500A11 11 0 0 1 12 .7M4 11.500a8 8 0 0 1 8-7.500M7 11.500a5 5 0 0 1 5-4.500" /><path d="M9 11.500a3 3 0 0 1 3-2.500v2.500z" fill="#fff" stroke="#fff" /></svg>
        </TrayButton>
        <TrayButton aria-label="Volume">
          <svg width="16" height="12" viewBox="0 0 16 12" fill="none" stroke="#fff"><path d="M.5 4h2.500l3-3v10l-3-3H.5zM8 4c1 1 1 3 0 4M10.300 2.500c2 2 2 5 0 7M12.700 1c2.800 3 2.800 7 0 10" /></svg>
        </TrayButton>
        <TrayButton $w={38}>ENG</TrayButton>
        <Clock>3:38 PM<br />5/6/2019</Clock>
        <TrayButton $w={58} aria-label="Notifications">
          <Notice>
            <svg width="16" height="16" viewBox="0 0 16 16"><path d="M0 0h16v12H8l-3.500 3.500V12H0z" fill="#fff" /><path d="M3 3.500h10M3 6h10M3 8.500h7" stroke="#382e32" /></svg>
            <Badge>2</Badge>
          </Notice>
        </TrayButton>
      </Tray>
    </TaskBar>
  );
}

function App() {
  return (
    <>
      <GlobalStyle />
      <Window>
        <TitleBar>
          <QuickAccess>
            <WordLogo />
            <Divider />
            <button aria-label="Save"><SaveIcon /></button>
            <button aria-label="Undo"><UndoIcon /></button>
            <Arrow c="#222" />
            <button aria-label="Redo"><RedoIcon /></button>
            <Divider $m={1} />
            <button aria-label="Customize toolbar">
              <svg width="7" height="6" viewBox="0 0 7 6"><path d="M0 .5h7" stroke="#222" /><path d="M0 2.500h7L3.500 6z" fill="#222" /></svg>
            </button>
          </QuickAccess>
          <WindowTitle>BTGiuaKy.doc [Compatibility Mode]  -  Microsoft Word (Product Activation Failed)</WindowTitle>
          <WindowButtons>
            <button aria-label="Minimize">
              <svg width="10" height="10" viewBox="0 0 10 10"><path d="M0 5.500h10" stroke="#222" /></svg>
            </button>
            <button aria-label="Restore">
              <svg width="10" height="10" viewBox="0 0 10 10" fill="none" stroke="#222"><path d="M.5 2.500h7v7h-7zM2.500 2.500v-2h7v7h-2" /></svg>
            </button>
            <button aria-label="Close">
              <svg width="10" height="10" viewBox="0 0 10 10"><path d="M.5.5l9 9M9.500.5l-9 9" stroke="#222" /></svg>
            </button>
          </WindowButtons>
        </TitleBar>
        <TabBar>
          <FileTab>File</FileTab>
          <Tab $active>Home</Tab>
          {tabs.map((t) => (
            <Tab key={t}>{t}</Tab>
          ))}
          <TabTools>
            <button aria-label="Minimize ribbon">
              <svg width="9" height="7" viewBox="0 0 9 7" fill="#fff" stroke="#666"><path d="M.7 4.500l3.800-4 3.800 4v2H6.500L4.500 4.500l-2 2H.7z" /></svg>
            </button>
            <HelpButton>?</HelpButton>
          </TabTools>
        </TabBar>
        <RibbonBar />
        <Workspace>
          <LeftRail>
            <TabSelector aria-label="Tab stop">
              <span>
                <svg width="6" height="6" viewBox="0 0 6 6"><path d="M1 0v5h5" fill="none" stroke="#333" strokeWidth="2" /></svg>
              </span>
            </TabSelector>
            <Ruler $v>
              <RulerMargin $size={48} />
              <RulerBody $v>
                {[1, 2, 3, 4, 5, 6, 7].map((n) => (
                  <InchMarks key={n} n={n} v />
                ))}
              </RulerBody>
            </Ruler>
          </LeftRail>
          <Document />
          <Scrollbar />
        </Workspace>
        <Status />
        <Tasks />
      </Window>
    </>
  );
}

export default App;
